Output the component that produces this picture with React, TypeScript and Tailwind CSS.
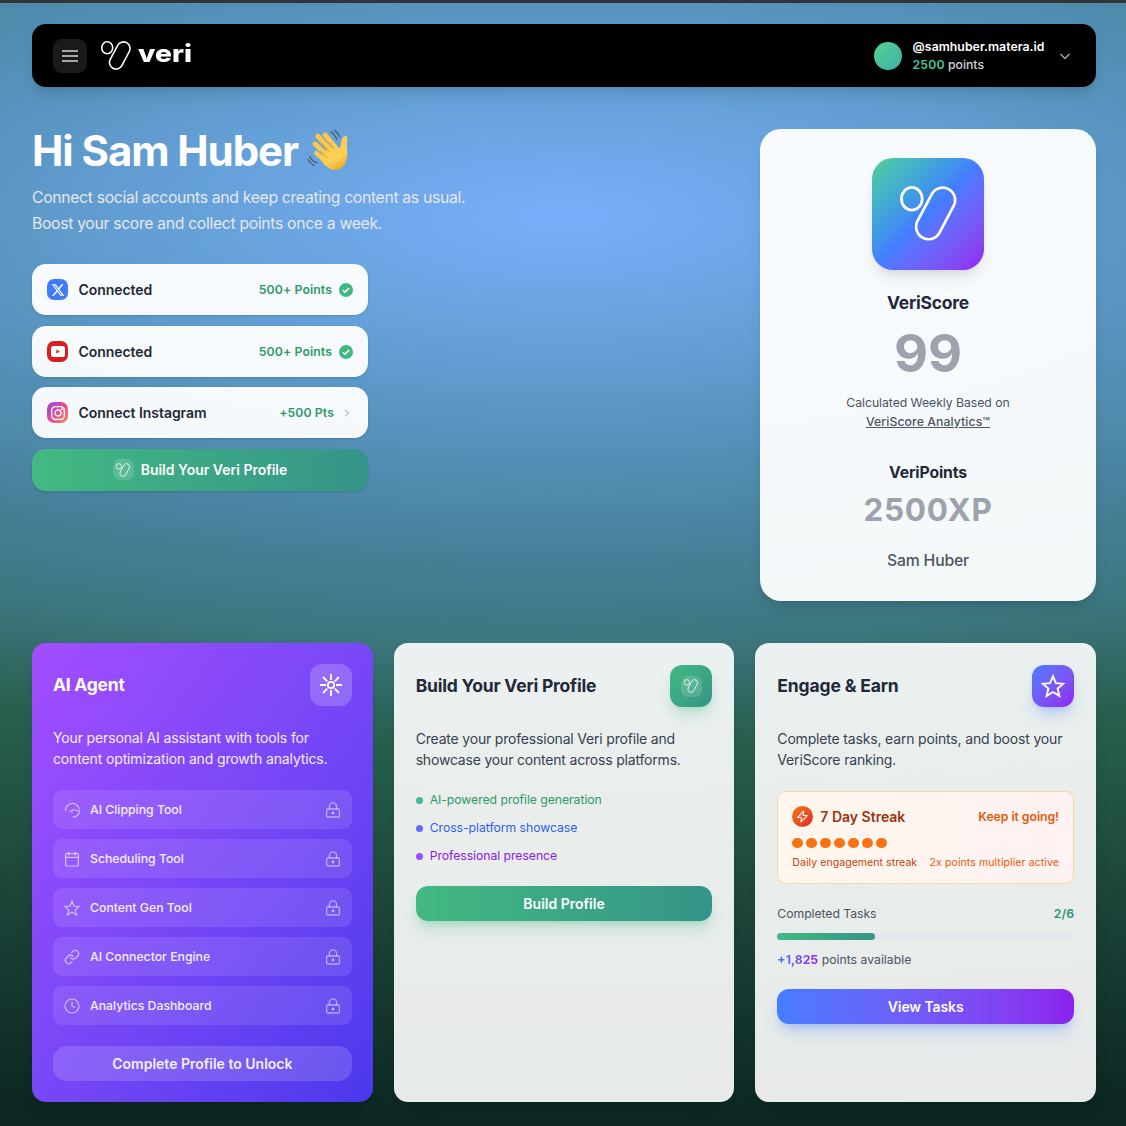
import React from "react";

type P = { className?: string };

function VeriMark({ className = "", w = 2.7 }: P & { w?: number }) {
  return (
    <svg viewBox="0 0 56.5 54.5" className={className} fill="none" stroke="currentColor" strokeWidth={w}>
      <ellipse cx="11.7" cy="12.6" rx="10.3" ry="11.2" />
      <path d="M31.4 8.2A12.3 12.3 0 0 1 53.2 19.8L39.2 46.2A12.3 12.3 0 0 1 17.4 34.6Z" strokeLinejoin="round" />
    </svg>
  );
}

function Wave({ className = "" }: P) {
  return (
    <svg viewBox="0 0 60 56" className={className}>
      <defs>
        <linearGradient id="hand" gradientUnits="userSpaceOnUse" x1="18" y1="10" x2="42" y2="50">
          <stop offset="0" stopColor="#fbc443" />
          <stop offset="0.7" stopColor="#fdd058" />
          <stop offset="1" stopColor="#e39a18" />
        </linearGradient>
      </defs>
      <g stroke="url(#hand)" strokeLinecap="round" fill="none">
        <path d="M17.8 14 L33 31" strokeWidth="4.9" />
        <path d="M25 12.8 L37 27.500" strokeWidth="4.9" />
        <path d="M15 21.8 L31 37" strokeWidth="4.9" />
        <path d="M16.3 31.3 L30 42" strokeWidth="4.6" />
      </g>
      <path d="M25 29 L36 25 Q39.500 27.500 40.500 24.500 C41 21 41.500 18.500 42.600 16 C44 12.800 48 14 47.400 17.200 C46.600 21 46.800 25 47.300 30 C48 40 43 47.600 36 48 C30 48 26 45 20 37.500 Z" fill="url(#hand)" />
      <path d="M21 20.500 L29.500 29.800 M28.500 20 L34.500 27 M20.500 29.500 L27.500 36" stroke="#d9921f" strokeWidth=".8" fill="none" />
      <path d="M31 9.800 Q35 12.800 37 17.500 M34.500 8.300 Q38 11 39.800 14.800 M9.800 34.500 Q12 39 16.800 40.800 M8 37.500 Q10 41.500 14 43.300" fill="none" stroke="#49596c" strokeWidth="1.300" strokeLinecap="round" />
    </svg>
  );
}

const Star = ({ className = "", w = 2 }: P & { w?: number }) => (
  <svg viewBox="0 0 24 24" className={className} fill="none" stroke="currentColor" strokeWidth={w}>
    <path d="m12 2.200 2.900 6.900 7.400.6-5.700 4.900 1.800 7.300L12 18l-6.400 3.900 1.800-7.300-5.700-4.900 7.400-.6z" />
  </svg>
);

const Lock = () => (
  <svg viewBox="0 0 16 16" className="size-4 text-white/50" fill="none" stroke="currentColor" strokeWidth="1.300">
    <rect x="1.600" y="7" width="12.800" height="8" rx="1.200" />
    <path d="M4.400 7V4.400a3.600 3.600 0 0 1 7.200 0V7" />
    <circle cx="8" cy="11" r=".8" fill="currentColor" />
  </svg>
);

const tools: { name: string; icon: React.ReactNode }[] = [
  { name: "AI Clipping Tool", icon: <><path d="M1.400 8.600A7 7 0 0 1 15.200 6.800" /><path d="M15.500 9A7 7 0 0 1 9 15" /><path d="m6 8.400 1.600 1.300 2.200-2.400M11.200 8l1.800.7 1.800-.2" /></> },
  { name: "Scheduling Tool", icon: <><rect x="1.600" y="2.600" width="12.800" height="12.400" rx="1" /><path d="M1.600 6.400h12.800M4.800 1v3M11.200 1v3" /></> },
  { name: "Content Gen Tool", icon: <path d="m8 1.200 2 4.900 5.200.4-4 3.400 1.300 5.100L8 12.200l-4.500 2.800 1.300-5.100-4-3.400L6 6.100z" /> },
  { name: "AI Connector Engine", icon: <g transform="scale(.667)"><path d="M10 13a5 5 0 0 0 7.540.54l3-3a5 5 0 0 0-7.070-7.070l-1.720 1.710" strokeWidth="1.900" /><path d="M14 11a5 5 0 0 0-7.540-.54l-3 3a5 5 0 0 0 7.070 7.070l1.710-1.710" strokeWidth="1.900" /></g> },
  { name: "Analytics Dashboard", icon: <><circle cx="8" cy="8" r="7" /><path d="M8 4v4.300l2.800 1" /></> },
];

function SocialRow({ icon, label, points, done }: { icon: React.ReactNode; label: string; points: string; done?: boolean }) {
  return (
    <div className="flex h-[51px] items-center rounded-[14px] bg-white/95 px-[15px] shadow-sm">
      {icon}
      <span className="ml-[10.5px] flex-1 text-[14px] font-semibold tracking-[-0.050px] text-[#1f2937]">{label}</span>
      <span className="text-[12.25px] font-semibold tracking-[0.1px] text-[#2f9968]">{points}</span>
      {done ? (
        <span className="ml-[7px] flex size-[14px] items-center justify-center rounded-full bg-[#41b883]">
          <svg viewBox="0 0 14 14" className="size-[14px]" fill="none" stroke="white" strokeWidth="1.500"><path d="m3.900 7.300 2 1.900 4.200-4.300" /></svg>
        </span>
      ) : (
        <svg viewBox="0 0 14 14" className="ml-[5px] size-[14px]" fill="none" stroke="#b8bec8" strokeWidth="1.200"><path d="m6 4 3.600 3.200L6 10.400" /></svg>
      )}
    </div>
  );
}

const tile = "flex size-[21px] shrink-0 items-center justify-center rounded-[7px]";

export default function App() {
  return (
    <div className="h-[1126px] w-[1126px] overflow-hidden border-t-[3px] border-[#333437] bg-[radial-gradient(2724px_908px_at_565px_214px,#78affc_0%,#6da7e8_7.7%,#639fd5_15.4%,#5692bb_24.2%,#4e8aab_30.8%,#48829e_35.2%,#3d7780_46.3%,#27604f_58%,#214f41_70%,#163931_86%,#0d2722_100%)] pr-[30px] pl-8 pt-[21px] font-['Inter',sans-serif] text-[14px] leading-[21px]">
      <header className="flex h-[63px] items-center rounded-[14px] bg-black px-[21px] shadow-lg">
        <button className="flex size-[34px] items-center justify-center rounded-[9px] bg-[#1a1a1a]">
          <svg viewBox="0 0 16 14" className="h-[14px] w-4" stroke="#d1d5db" strokeWidth="1.600"><path d="M0 2h16M0 7h16M0 12h16" /></svg>
        </button>
        <VeriMark className="ml-[14px] h-[29px] w-[30px] text-white" w={2.9} />
        <span className="relative -top-[2px] ml-[7px] w-[54px] origin-left scale-x-[1.18] text-[24px] font-extrabold text-white">veri</span>
        <div className="flex-1" />
        <span className="size-7 rounded-full bg-linear-to-br from-[#55d194] to-[#40b0a5]" />
        <div className="ml-[10.5px] text-[12.25px] leading-[18px]">
          <div className="font-semibold tracking-[0.05px] text-white">@samhuber.matera.id</div>
          <div className="font-medium text-[#d1d5db]"><span className="font-semibold tracking-[0.15px] text-[#4bc796]">2500</span> points</div>
        </div>
        <svg viewBox="0 0 14 14" className="mr-[3px] ml-[13.5px] size-[14px]" fill="none" stroke="#9ca3af" strokeWidth="1.500"><path d="m2.500 5 4.500 4.500L11.500 5" /></svg>
      </header>

      <section className="mt-[42px] flex h-[472px] justify-between">
        <div className="w-[440px]">
          <h1 className="flex h-[43px] items-center text-[42px] leading-[42px] font-bold tracking-[-1.080px] text-white">Hi Sam Huber<Wave className="mb-px ml-[2px] h-[56px] w-[60px] shrink-0" /></h1>
          <p className="mt-[13px] text-[15.750px] leading-[26px] tracking-[-0.325px] whitespace-nowrap text-[#e5e7eb]">Connect social accounts and keep creating content as usual.<br />Boost your score and collect points once a week.</p>
          <div className="mt-[27px] w-[336px]">
            <SocialRow done label="Connected" points="500+ Points" icon={
              <span className={`${tile} bg-[#407bff]`}><svg viewBox="0 0 24 24" className="size-[14px]" fill="white"><path d="M18.244 2.250h3.308l-7.227 8.260 8.502 11.240H16.170l-5.214-6.817L4.990 21.750H1.680l7.730-8.835L1.254 2.250H8.080l4.713 6.231zm-1.161 17.520h1.833L7.084 4.126H5.117z" /></svg></span>} />
            <div className="mt-[11px]">
              <SocialRow done label="Connected" points="500+ Points" icon={
                <span className={`${tile} bg-[#d81f1f]`}><svg viewBox="0 0 14 11" className="h-[11px] w-[14px]"><rect width="14" height="11" rx="2.600" fill="white" /><path d="M5.300 3.500v4L8.900 5.500z" fill="#d81f1f" /></svg></span>} />
            </div>
            <div className="mt-[10px]">
              <SocialRow label="Connect Instagram" points="+500 Pts" icon={
                <span className={`${tile} bg-linear-to-br from-[#9b35e5] via-[#e34b93] to-[#fb8a4c]`}><svg viewBox="0 0 14 14" className="size-[14px]" fill="none" stroke="white" strokeWidth="1.300"><rect x=".7" y=".7" width="12.600" height="12.600" rx="3.600" /><circle cx="7" cy="7" r="3" /><circle cx="10.800" cy="3.200" r=".4" /></svg></span>} />
            </div>
            <button className="mt-[11px] flex h-[42px] w-full items-center justify-center rounded-[14px] bg-linear-to-r from-[#43b981] to-[#359488] pb-px text-[14px] font-semibold text-white shadow-sm">
              <span className="mr-[7px] flex size-[21px] items-center justify-center rounded-[7px] bg-white/15"><VeriMark className="size-[14px]" w={3.4} /></span>
              Build Your Veri Profile
            </button>
          </div>
        </div>

        <div className="flex w-[336px] flex-col items-center rounded-[21px] bg-white/95 pt-[29px] text-center shadow-lg">
          <div className="flex size-28 items-center justify-center rounded-[21px] bg-linear-to-br from-[#55d194] via-[#447dff] to-[#9120ee] pb-px text-white shadow-lg">
            <VeriMark className="h-[55px] w-[57px]" w={2.7} />
          </div>
          <h2 className="mt-[21px] text-[17.500px] leading-[24px] font-bold tracking-[-0.250px] text-[#1f2937]">VeriScore</h2>
          <div className="mt-[12px] text-[52.500px] leading-[53px] font-bold text-[#9ca3af]">99</div>
          <p className="mt-[13px] text-[12.250px] leading-[19px] tracking-[-0.050px] text-[#4b5563]">Calculated Weekly Based on<br /><span className="font-medium tracking-[0.080px] underline">VeriScore Analytics™</span></p>
          <h3 className="mt-[30px] text-[15.750px] leading-[24px] font-bold tracking-[-0.150px] text-[#1f2937]">VeriPoints</h3>
          <div className="mt-[7px] text-[31.500px] leading-[35px] font-bold tracking-[0.700px] text-[#9ca3af]">2500XP</div>
          <div className="mt-[22px] text-[15.750px] leading-[24px] font-medium tracking-[-0.200px] text-[#4b5563]">Sam Huber</div>
        </div>
      </section>

      <section className="mt-[42px] grid h-[459px] grid-cols-3 gap-[21px]">
        <div className="rounded-[14px] bg-linear-to-br from-[#a34dff] via-[#7847f7] to-[#4b38ec] p-[21px] text-white shadow-lg">
          <div className="flex items-center justify-between">
            <h2 className="text-[17.500px] leading-[24px] font-bold tracking-[-0.250px]">AI Agent</h2>
            <span className="flex size-[42px] items-center justify-center rounded-[12px] bg-white/20">
              <svg viewBox="0 0 22 22" className="size-[22px]" fill="none" stroke="white" strokeWidth="1.800"><circle cx="11" cy="11" r="3.200" /><path d="M11 0v6M11 16v6M0 11h6M16 11h6M3 3l4.300 4.300M14.700 14.700 19 19M3 19l4.300-4.300M14.700 7.300 19 3" /></svg>
            </span>
          </div>
          <p className="mt-[21px] text-[14px] leading-[21px] tracking-[-0.140px] whitespace-nowrap text-white/90">Your personal AI assistant with tools for<br />content optimization and growth analytics.</p>
          <div className="mt-[21px] grid gap-[10px]">
            {tools.map((t) => (
              <div key={t.name} className="flex h-[39px] items-center rounded-[9px] bg-white/10 px-[11px]">
                <svg viewBox="0 0 16 16" className="size-4 text-white/60" fill="none" stroke="currentColor" strokeWidth="1.200" strokeLinecap="round">{t.icon}</svg>
                <span className="ml-[10px] flex-1 text-[12.250px] font-medium text-white/90">{t.name}</span>
                <Lock />
              </div>
            ))}
          </div>
          <button className="mt-[21px] h-[35px] w-full rounded-[14px] bg-white/15 text-[14px] font-semibold text-white/90">Complete Profile to Unlock</button>
        </div>

        <div className="rounded-[14px] bg-white/90 p-[22px] shadow-lg">
          <div className="flex items-center justify-between">
            <h2 className="text-[17.500px] leading-[24px] font-bold tracking-[-0.200px] text-[#1f2937]">Build Your Veri Profile</h2>
            <span className="flex size-[42px] items-center justify-center rounded-[12px] bg-linear-to-br from-[#43b981] to-[#359488] text-white shadow-lg shadow-[#43b981]/30">
              <span className="flex size-[21px] items-center justify-center rounded-[7px] bg-white/15"><VeriMark className="size-[14px]" w={3.4} /></span>
            </span>
          </div>
          <p className="mt-[21px] text-[14px] leading-[21px] tracking-[-0.190px] whitespace-nowrap text-[#374151]">Create your professional Veri profile and<br />showcase your content across platforms.</p>
          <ul className="mt-[21px] grid gap-[10px] text-[12.250px] leading-[18px] tracking-[-0.060px]">
            <li className="flex items-center text-[#2f9968]"><i className="mr-[7px] size-[7px] rounded-full bg-[#43b895]" />AI-powered profile generation</li>
            <li className="flex items-center text-[#2f5ff0]"><i className="mr-[7px] size-[7px] rounded-full bg-[#5b6cff]" />Cross-platform showcase</li>
            <li className="flex items-center text-[#8b20e8]"><i className="mr-[7px] size-[7px] rounded-full bg-[#9a4dff]" />Professional presence</li>
          </ul>
          <button className="mt-[21px] h-[35px] w-full rounded-[12px] bg-linear-to-r from-[#43b981] to-[#359488] text-[14px] font-semibold text-white shadow-lg shadow-[#43b981]/30">Build Profile</button>
        </div>

        <div className="rounded-[14px] bg-white/90 p-[22px] shadow-lg">
          <div className="flex items-center justify-between">
            <h2 className="text-[17.500px] leading-[24px] font-bold tracking-[-0.150px] text-[#1f2937]">Engage &amp; Earn</h2>
            <span className="flex size-[42px] items-center justify-center rounded-[12px] bg-linear-to-br from-[#447dff] to-[#9120ee] text-white shadow-lg shadow-[#447dff]/30"><Star className="size-6" w={1.900} /></span>
          </div>
          <p className="mt-[21px] text-[14px] leading-[21px] tracking-[-0.170px] whitespace-nowrap text-[#374151]">Complete tasks, earn points, and boost your<br />VeriScore ranking.</p>
          <div className="mt-[21px] h-[93px] rounded-[9px] border border-[#fbd5a5] bg-linear-to-r from-[#fff7ed] to-[#fef2f2] p-[14px]">
            <div className="flex items-center">
              <span className="flex size-[21px] items-center justify-center rounded-full bg-linear-to-br from-[#f97316] to-[#dc2626]">
                <svg viewBox="0 0 14 14" className="size-[13px]" fill="none" stroke="white" strokeWidth="1.100" strokeLinejoin="round"><path d="M8.300 1.200 1.800 8h4.100l-.6 4.800L12.200 6H7.600z" /></svg>
              </span>
              <span className="ml-[7px] flex-1 text-[14px] font-semibold text-[#9a3412]">7 Day Streak</span>
              <span className="text-[12.250px] font-semibold tracking-[-0.050px] text-[#ea580c]">Keep it going!</span>
            </div>
            <div className="mt-[11px] flex gap-[3px]">{[0, 1, 2, 3, 4, 5, 6].map((d) => <i key={d} className="h-[10px] w-[11px] rounded-full bg-[#f97316]" />)}</div>
            <div className="mt-[8px] flex justify-between text-[10.500px] leading-[14px] whitespace-nowrap text-[#c2410c]"><span className="tracking-[0.070px]">Daily engagement streak</span><span className="tracking-[0.100px] text-[#ea580c]">2x points multiplier active</span></div>
          </div>
          <div className="mt-[21px] flex justify-between text-[12.250px] leading-[18px] text-[#4b5563]"><span className="tracking-[-0.070px]">Completed Tasks</span><span className="font-semibold text-[#2f9378]">2/6</span></div>
          <div className="mt-[10px] h-[7px] rounded-full bg-[#e5e7eb]"><div className="h-full w-[33%] rounded-full bg-linear-to-r from-[#43b981] to-[#359488]" /></div>
          <div className="mt-[11px] text-[12.250px] leading-[18px] text-[#4b5563]"><span className="bg-linear-to-r from-[#3f70ff] to-[#9120ee] bg-clip-text font-bold text-transparent">+1,825</span> points available</div>
          <button className="mt-[20px] h-[35px] w-full rounded-[12px] bg-linear-to-r from-[#447dff] to-[#8b20ee] text-[14px] font-semibold tracking-[-0.100px] text-white shadow-lg shadow-[#447dff]/30">View Tasks</button>
        </div>
      </section>
    </div>
  );
}
